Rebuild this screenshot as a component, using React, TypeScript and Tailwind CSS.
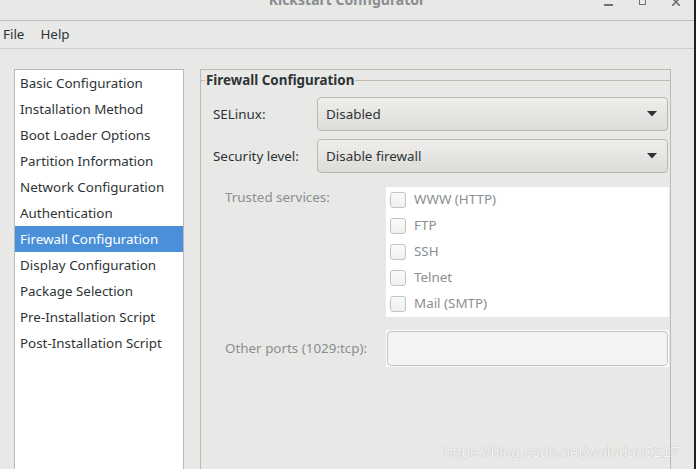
import React from "react";

const items = [
  "Basic Configuration",
  "Installation Method",
  "Boot Loader Options",
  "Partition Information",
  "Network Configuration",
  "Authentication",
  "Firewall Configuration",
  "Display Configuration",
  "Package Selection",
  "Pre-Installation Script",
  "Post-Installation Script",
];

const services = ["WWW (HTTP)", "FTP", "SSH", "Telnet", "Mail (SMTP)"];

function Combo({ text }: { text: string }) {
  return (
    <div className="h-[34px] flex-1 mr-[2px] flex items-center justify-between rounded-[4px] border border-[#b8b8b4] bg-gradient-to-b from-[#efeeec] to-[#dedcd9] pl-[8px] pr-[10px] text-[#2e3436]">
      <span>{text}</span>
      <svg width="10" height="6" viewBox="0 0 10 6">
        <path d="M0 0 L10 0 L5 5.5 Z" fill="#2e3436" />
      </svg>
    </div>
  );
}

export default function App() {
  return (
    <div
      className="w-[696px] h-[469px] bg-[#e8e8e7] flex overflow-hidden relative text-[13.4px] text-[#2e3436]"
      style={{ fontFamily: '"Noto Sans", sans-serif' }}
    >
      <div className="flex-1 flex flex-col">
        {/* title bar */}
        <div className="h-[21px] border-b border-[#bdbdbb] relative flex justify-center">
          <div className="-mt-[10px] font-bold text-[14px] text-[#8a8d8f] leading-[20px]">Kickstart Configurator</div>
          <div className="absolute right-[14px] top-0 flex items-start gap-[26px] text-[#6f7172]">
            <div className="w-[9px] h-[2px] bg-[#6f7172] mt-[4px]" />
            <div className="w-[7px] h-[5px] border-[1.5px] border-t-0 border-[#6f7172] mt-0" />
            <svg width="8" height="6" viewBox="0 0 8 6" className="mt-0">
              <path d="M0 -2 L8 6 M8 -2 L0 6" stroke="#6f7172" strokeWidth="1.6" />
            </svg>
          </div>
        </div>
        {/* menu bar */}
        <div className="h-[28px] border-b border-[#cfcfcd] flex items-center gap-[16px] pl-[3px] pb-[1px]">
          <span>File</span>
          <span>Help</span>
        </div>
        {/* body */}
        <div className="flex-1 flex pt-[20px] pl-[14px]">
          <div className="w-[170px] border border-b-0 border-[#b9b9b6] bg-white flex flex-col">
            {items.map((it) => (
              <div
                key={it}
                className={
                  "h-[26px] flex items-center pl-[5px] " +
                  (it === "Firewall Configuration" ? "bg-[#4a90d9] text-white" : "")
                }
              >
                {it}
              </div>
            ))}
          </div>
          <div className="ml-[16px] w-[471px] border border-b-0 border-[#bbbbb8] flex flex-col">
            <div className="h-[21px] flex items-center pb-[1px]">
              <div className="w-[4px] h-px bg-[#bbbbb8] mt-[1px]" />
              <span className="font-bold px-[1px]">Firewall Configuration</span>
              <div className="flex-1 h-px bg-[#bbbbb8] mt-[1px]" />
            </div>
            <div className="flex flex-col gap-[8px] mt-[6px]">
              <div className="flex items-center">
                <div className="w-[116px] pl-[12px]">SELinux:</div>
                <Combo text="Disabled" />
              </div>
              <div className="flex items-center">
                <div className="w-[116px] pl-[12px]">Security level:</div>
                <Combo text="Disable firewall" />
              </div>
            </div>
            <div className="flex mt-[14px]">
              <div className="w-[185px] pl-[24px] text-[#8b8e8f]">Trusted services:</div>
              <div className="flex-1 mr-[1px] bg-white flex flex-col">
                {services.map((s) => (
                  <div key={s} className="h-[26px] flex items-center pl-[4px] gap-[8px] text-[#8b8e8f]">
                    <div className="w-[16px] h-[16px] rounded-[3px] border border-[#c3c3c0] bg-gradient-to-b from-[#fafafa] to-[#f0f0ef]" />
                    <span className="pb-[1px]">{s}</span>
                  </div>
                ))}
              </div>
            </div>
            <div className="flex items-center mt-[13px]">
              <div className="w-[185px] pl-[24px] text-[#8b8e8f]">Other ports (1029:tcp):</div>
              <div className="flex-1 mr-[1px] p-px bg-[#fbfbfb]">
                <div className="h-[35px] rounded-[4px] border border-[#c4c4c1] bg-[#f3f3f2]" />
              </div>
            </div>
          </div>
        </div>
      </div>
      <div className="w-[2px] bg-[#17262c]" />
      <div
        className="absolute left-[444px] top-[440px] text-[15.5px] text-white/90"
        style={{ fontFamily: '"Liberation Sans", sans-serif', textShadow: "0 0 1px rgba(100,100,100,0.6)" }}
      >
        https://blog.csdn.net/wuludan0217
      </div>
    </div>
  );
}
